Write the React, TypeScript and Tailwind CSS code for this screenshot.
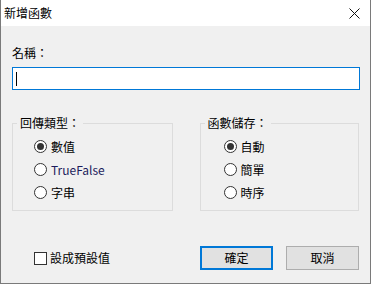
import { useState } from 'react'

const FONT = "font-['Noto_Sans_CJK_TC','Noto_Sans',sans-serif]"

function Radio({ label, checked, onClick, tone = 'text-black' }: { label: string; checked: boolean; onClick: () => void; tone?: string }) {
  return (
    <button type="button" onClick={onClick} className="flex h-[23px] items-center gap-[4px]">
      <span className="flex h-[13px] w-[13px] items-center justify-center rounded-full border border-[#333] bg-white">
        {checked && <span className="h-[7px] w-[7px] rounded-full bg-[#333]" />}
      </span>
      <span className={`text-[12px] leading-[16px] ${tone}`}>{label}</span>
    </button>
  )
}

function GroupBox({ title, width, indent, children }: { title: string; width: string; indent: string; children: React.ReactNode }) {
  return (
    <fieldset className={`h-[96px] ${width} border border-[#dcdcdc]`}>
      <legend className="ml-[4px] px-[3px] text-[12px] leading-[16px] text-black">{title}</legend>
      <div className={`flex flex-col pt-[4px] ${indent}`}>{children}</div>
    </fieldset>
  )
}

export default function App() {
  const [kind, setKind] = useState('數值')
  const [store, setStore] = useState('自動')
  const [isDefault, setIsDefault] = useState(false)

  return (
    <div className={`flex h-[284px] w-[371px] flex-col border-x border-b border-[#7a7a7a] bg-[#f0f0f0] ${FONT}`}>
      {/* title bar */}
      <div className="flex h-[26px] items-center justify-between bg-white pl-[3px] pr-[10px]">
        <span className="text-[12px] leading-[16px] text-black">新增函數</span>
        <svg width="11" height="11" viewBox="0 0 11 11" aria-hidden="true" className="mt-[1px]">
          <path d="M0.5 0.5L10.5 10.5M10.5 0.5L0.5 10.5" stroke="#111" strokeWidth="1" />
        </svg>
      </div>

      <div className="flex flex-col px-[11px]">
        <span className="mt-[19px] text-[12px] leading-[16px] text-black">名稱：</span>
        <div className="mt-[6px] flex h-[23px] w-[348px] items-center border border-[#0078d7] bg-white pl-[3px]">
          <span className="h-[14px] w-px bg-black" />
        </div>

        <div className="mt-[25px] flex gap-[27px]">
          <GroupBox title="回傳類型：" width="w-[161px]" indent="pl-[21px]">
            <Radio label="數值" checked={kind === '數值'} onClick={() => setKind('數值')} />
            <Radio label="TrueFalse" checked={kind === 'TrueFalse'} onClick={() => setKind('TrueFalse')} tone="text-[#1c1c5c]" />
            <Radio label="字串" checked={kind === '字串'} onClick={() => setKind('字串')} />
          </GroupBox>
          <GroupBox title="函數儲存：" width="w-[160px]" indent="pl-[23px]">
            <Radio label="自動" checked={store === '自動'} onClick={() => setStore('自動')} />
            <Radio label="簡單" checked={store === '簡單'} onClick={() => setStore('簡單')} />
            <Radio label="時序" checked={store === '時序'} onClick={() => setStore('時序')} />
          </GroupBox>
        </div>

        <div className="mt-[35px] flex items-center">
          <button type="button" onClick={() => setIsDefault(!isDefault)} className="ml-[22px] flex w-[166px] items-center gap-[3px]">
            <span className="flex h-[13px] w-[13px] items-center justify-center border border-[#333] bg-white">
              {isDefault && (
                <svg width="9" height="9" viewBox="0 0 9 9" aria-hidden="true">
                  <path d="M1 4.5L3.5 7L8 1.5" stroke="#333" strokeWidth="1.3" fill="none" />
                </svg>
              )}
            </span>
            <span className="text-[12px] leading-[16px] text-black">設成預設值</span>
          </button>
          <button type="button" className="h-[24px] w-[73px] border-2 border-[#0078d7] bg-[#e1e1e1] text-[12px] leading-[16px] text-black">
            確定
          </button>
          <button type="button" className="ml-[13px] h-[24px] w-[73px] border border-[#adadad] bg-[#e1e1e1] text-[12px] leading-[16px] text-black">
            取消
          </button>
        </div>
      </div>
    </div>
  )
}
